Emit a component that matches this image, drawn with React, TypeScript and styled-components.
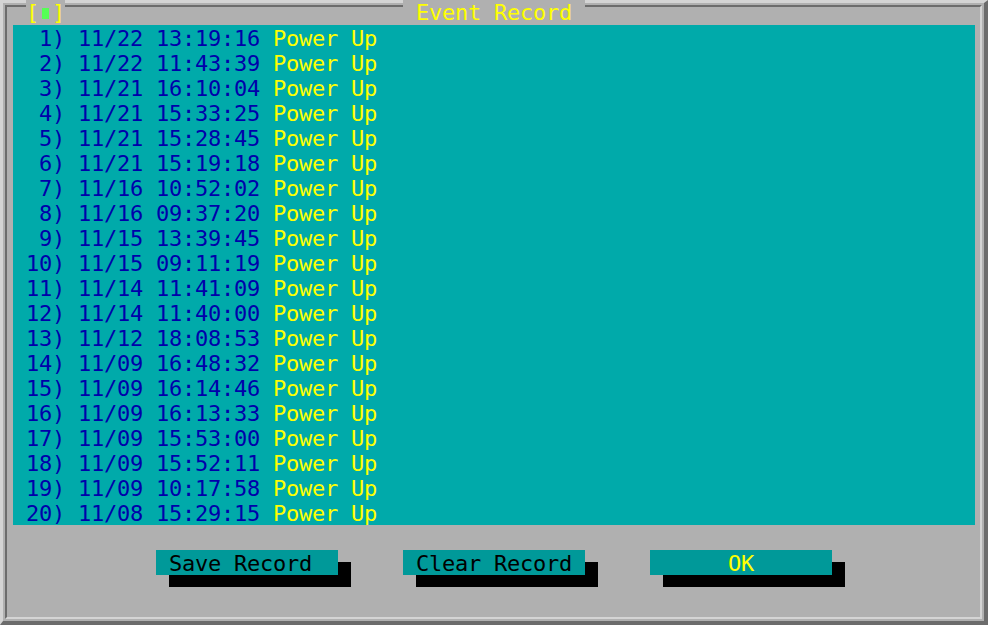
import React from "react";
import styled, { createGlobalStyle } from "styled-components";

const GlobalStyle = createGlobalStyle`
  html, body {
    margin: 0;
    padding: 0;
    background: #b0b0b0;
  }
  body {
    width: 988px;
    height: 625px;
    overflow: hidden;
  }
`;

const Screen = styled.div`
  position: relative;
  box-sizing: border-box;
  width: 988px;
  height: 625px;
  background: #b0b0b0;
  border-style: solid;
  border-width: 3px 4px 4px 3px;
  border-color: #d4d4d4 #6c6c6c #6c6c6c #d4d4d4;
  padding: 2px;
  font-family: "DejaVu Sans Mono", "Liberation Mono", monospace;
  font-size: 22px;
  letter-spacing: -0.245px;
  line-height: 25px;
`;

const Frame = styled.div`
  box-sizing: border-box;
  height: 100%;
  border-style: solid;
  border-width: 2px;
  border-color: #6c6c6c #d4d4d4 #d4d4d4 #6c6c6c;
  padding: 18px 5px 0 6px;
  display: flex;
  flex-direction: column;
`;

const TitleTab = styled.div`
  position: absolute;
  top: -3px;
  left: 400px;
  width: 182px;
  height: 25px;
  background: #b0b0b0;
  color: #ffff00;
  white-space: pre;
`;

const CloseBox = styled.div`
  position: absolute;
  top: -3px;
  left: 23px;
  height: 25px;
  display: flex;
  background: #b0b0b0;
  color: #ffff00;
`;

const Cell = styled.span`
  display: inline-flex;
  width: 13px;
  height: 25px;
  align-items: flex-start;
  justify-content: flex-start;
  white-space: pre;
`;

const GreenMark = styled.span`
  display: block;
  width: 7px;
  height: 11px;
  margin: 8px 0 0 3px;
  background: #55ff55;
`;

const List = styled.div`
  box-sizing: border-box;
  height: 500px;
  background: #00aaaa;
  padding-left: 13px;
  display: flex;
  flex-direction: column;
`;

const Row = styled.div`
  box-sizing: border-box;
  height: 25px;
  padding-top: 1px;
  white-space: pre;
`;

const Stamp = styled.span`
  color: #0000aa;
`;

const Event = styled.span`
  color: #ffff00;
`;

const ButtonBar = styled.div`
  display: flex;
  justify-content: center;
  gap: 65px;
  margin-top: 25px;
`;

const Button = styled.div<{ $default?: boolean }>`
  box-sizing: border-box;
  width: 182px;
  height: 25px;
  padding-top: 1px;
  background: #009999;
  box-shadow: 13px 12px 0 #000;
  color: ${(p) => (p.$default ? "#ffff00" : "#000000")};
  white-space: pre;
  overflow: hidden;
`;

const records: [string, string][] = [
  ["11/22", "13:19:16"],
  ["11/22", "11:43:39"],
  ["11/21", "16:10:04"],
  ["11/21", "15:33:25"],
  ["11/21", "15:28:45"],
  ["11/21", "15:19:18"],
  ["11/16", "10:52:02"],
  ["11/16", "09:37:20"],
  ["11/15", "13:39:45"],
  ["11/15", "09:11:19"],
  ["11/14", "11:41:09"],
  ["11/14", "11:40:00"],
  ["11/12", "18:08:53"],
  ["11/09", "16:48:32"],
  ["11/09", "16:14:46"],
  ["11/09", "16:13:33"],
  ["11/09", "15:53:00"],
  ["11/09", "15:52:11"],
  ["11/09", "10:17:58"],
  ["11/08", "15:29:15"],
];

export default function App() {
  return (
    <>
      <GlobalStyle />
      <Screen>
        <CloseBox>
          <Cell>[</Cell>
          <Cell>
            <GreenMark />
          </Cell>
          <Cell>]</Cell>
        </CloseBox>
        <TitleTab>{" Event Record "}</TitleTab>
        <Frame>
          <List>
            {records.map(([d, t], i) => (
              <Row key={i}>
                <Stamp>{`${String(i + 1).padStart(2, " ")}) ${d} ${t} `}</Stamp>
                <Event>Power Up</Event>
              </Row>
            ))}
          </List>
          <ButtonBar>
            <Button>{" Save Record  "}</Button>
            <Button>{" Clear Record "}</Button>
            <Button $default>{"      OK      "}</Button>
          </ButtonBar>
        </Frame>
      </Screen>
    </>
  );
}
